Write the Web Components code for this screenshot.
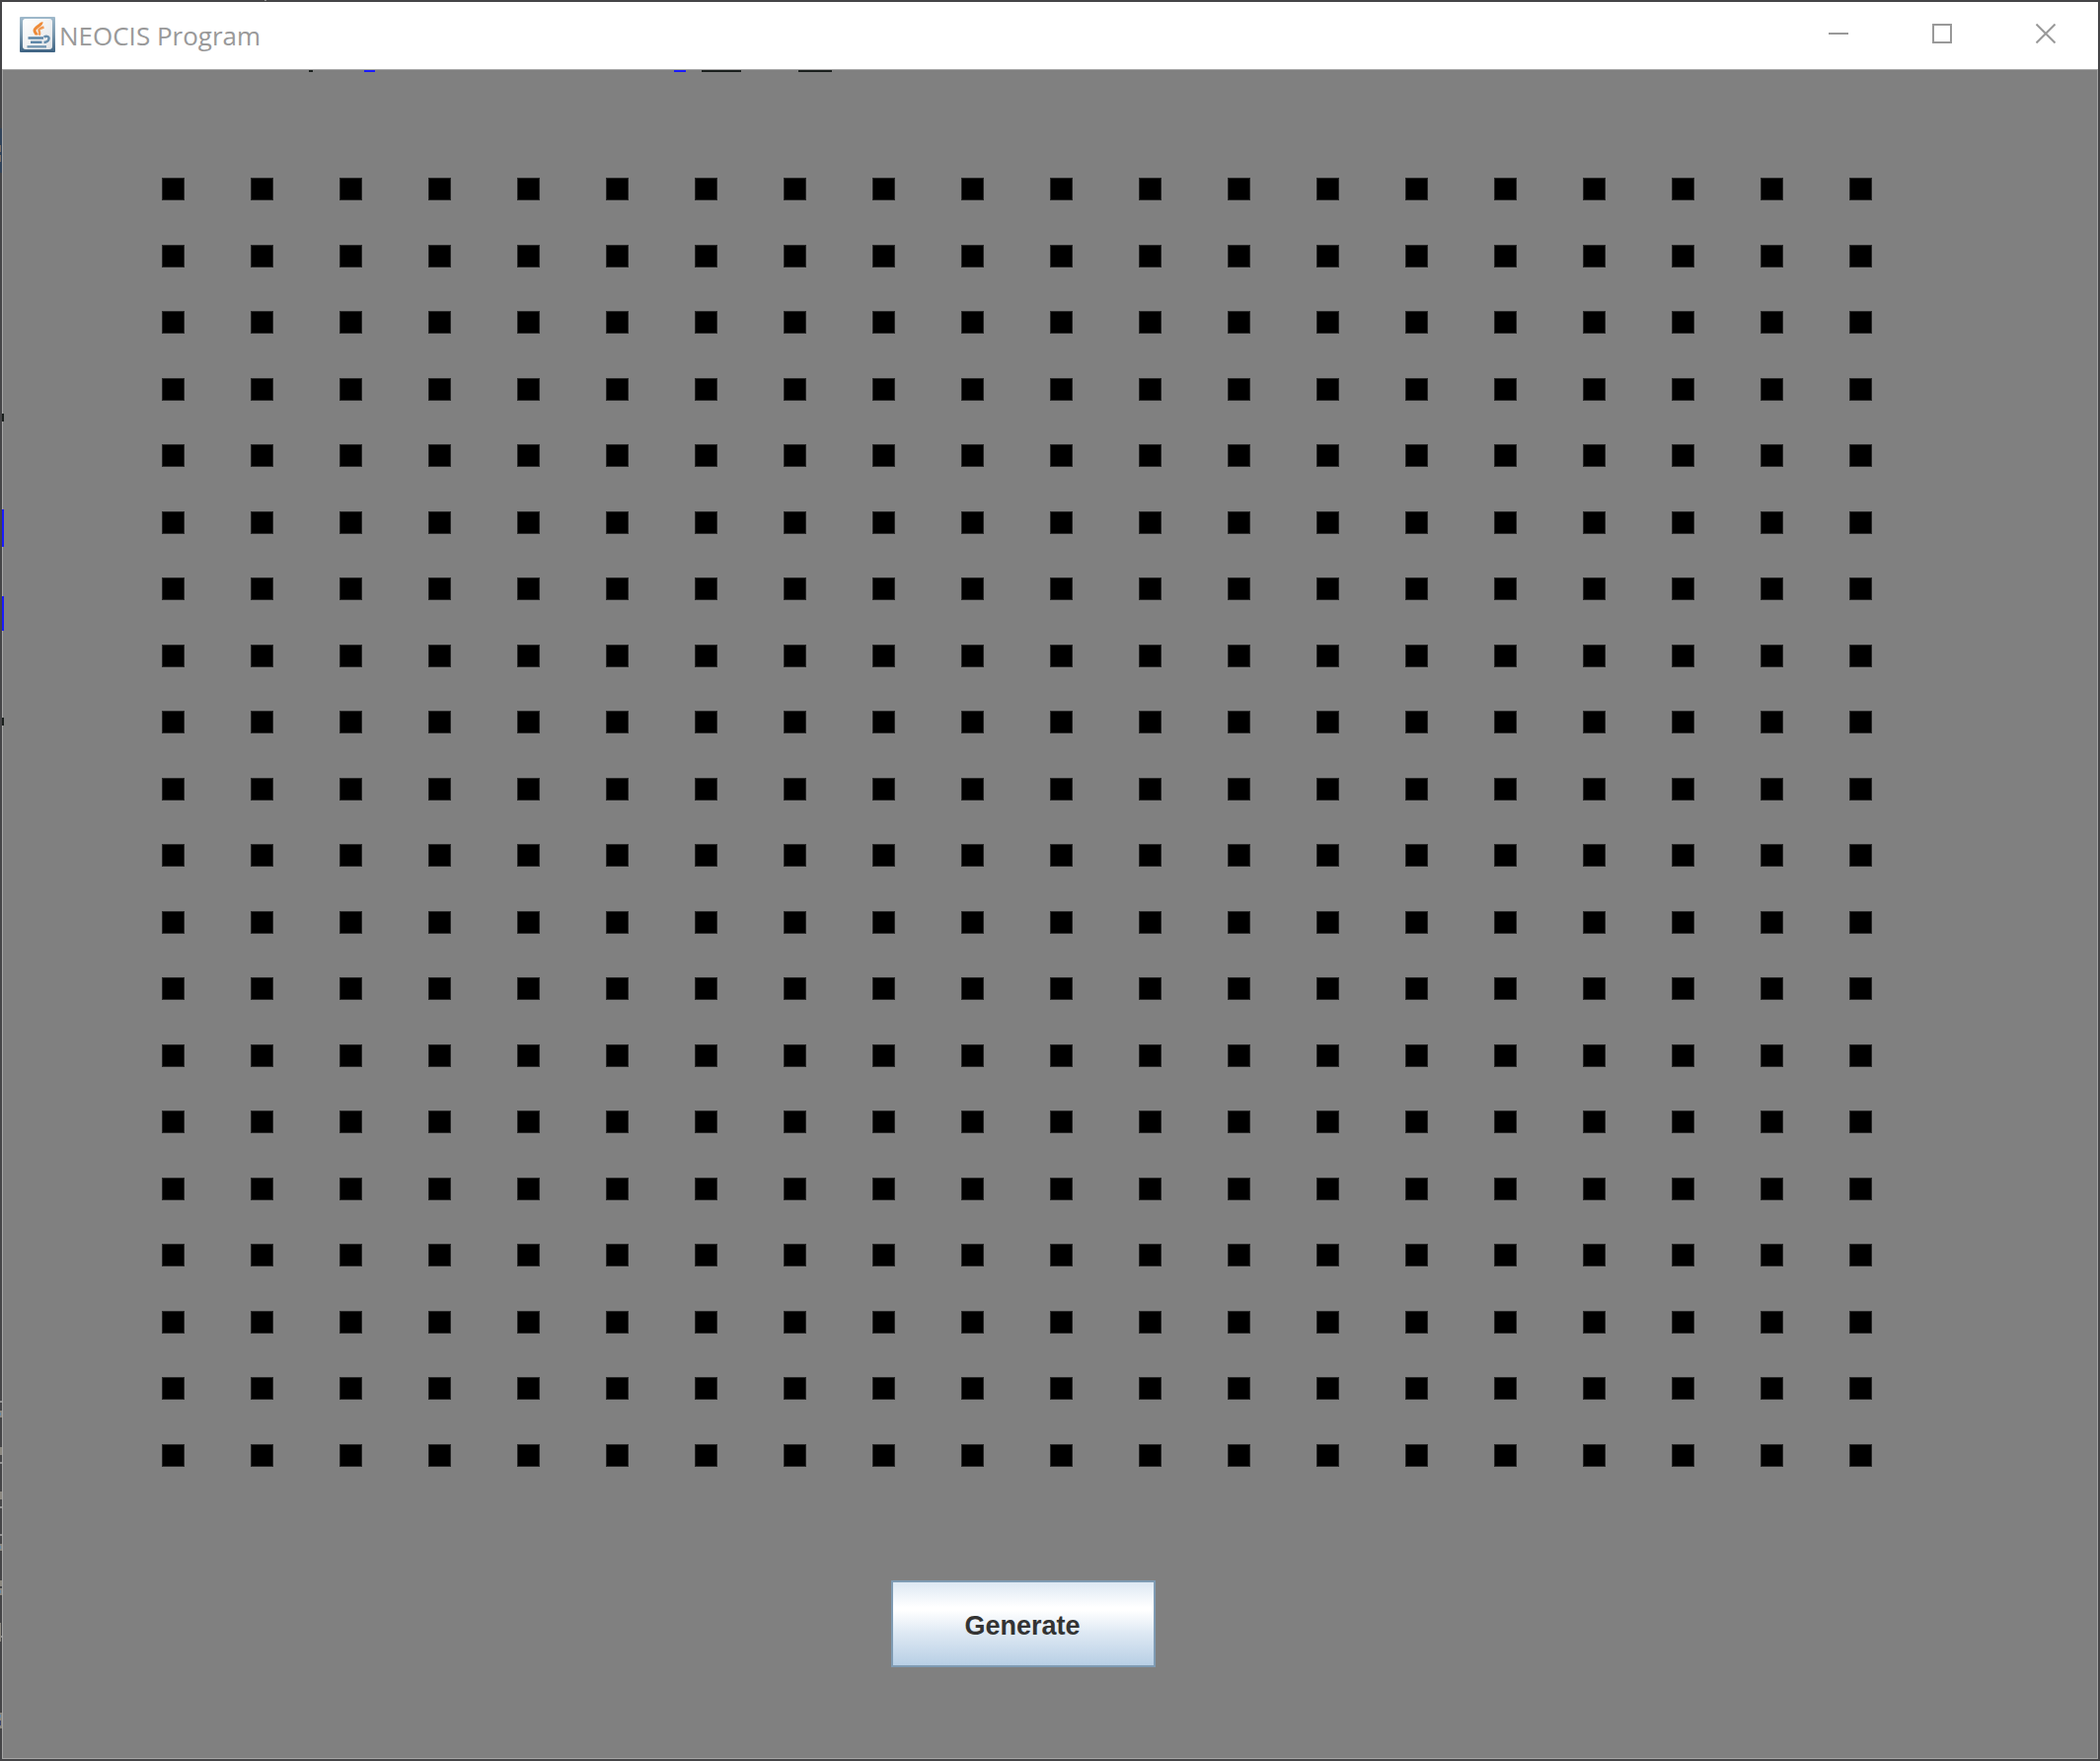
<!DOCTYPE html>
<html lang="en">
<head>
<meta charset="utf-8">
<title>NEOCIS Program</title>
<style>
  html, body { height: 100%; margin: 0; }
  body { background: #454547; font-family: "Open Sans", "Noto Sans", sans-serif; }
</style>
</head>
<body>
<app-window>
  <title-bar slot="title">NEOCIS Program</title-bar>
  <point-grid></point-grid>
  <metal-button>Generate</metal-button>
</app-window>

<script>
class BaseElement extends HTMLElement {
  constructor() {
    super();
    this.attachShadow({ mode: "open" }).innerHTML = this.constructor.markup;
  }
}

customElements.define("java-icon", class extends BaseElement {
  static markup = `
    <style>:host { display: block; width: 36px; height: 36px; } svg { display: block; }</style>
    <svg width="36" height="36" viewBox="0 0 36 36" fill="none" aria-hidden="true">
      <defs>
        <linearGradient id="edge" x1="0" y1="0" x2="0" y2="1">
          <stop offset="0" stop-color="#9fb9cb"/><stop offset=".5" stop-color="#7897ad"/><stop offset="1" stop-color="#3d6282"/>
        </linearGradient>
        <linearGradient id="face" x1="0" y1="0" x2="1" y2="1">
          <stop offset="0" stop-color="#ffffff"/><stop offset="1" stop-color="#e3e5e7"/>
        </linearGradient>
      </defs>
      <rect width="36" height="36" rx="1" fill="url(#edge)"/>
      <rect x="3" y="2" width="30" height="31" rx="3" fill="url(#face)"/>
      <path d="M22 5.500c.8 3-7 5-7 8.500 0 2 2 2.500 2 4.500" stroke="#ee8a38" stroke-width="3"/>
      <path d="M24.500 10.500c-3 .8-5.500 2-5 3.500.4 1.500 1.500 2 0 4.500" stroke="#f09a55" stroke-width="2.500"/>
      <path d="M8.500 21.500h15.500M11 25.800h11.500" stroke="#5e87a8" stroke-width="2.600"/>
      <path d="M24.500 20.500c3-1.500 5.500-.5 5 2-.4 2-2.500 3.200-5 3.500" stroke="#668dab" stroke-width="2.400"/>
      <path d="M7.500 30.300h19.500" stroke="#7598b3" stroke-width="2.400"/>
    </svg>`;
});

customElements.define("caption-button", class extends BaseElement {
  static markup = `
    <style>
      :host { display: block; width: 105px; height: 64px; }
      button { display: flex; align-items: center; justify-content: center; width: 100%; height: 100%;
               padding: 0; border: 0; background: none; }
      svg { display: block; }
    </style>
    <button type="button"><svg width="20" height="20" viewBox="0 0 20 20" fill="none" stroke="#999" stroke-width="2" aria-hidden="true"><path/></svg></button>`;
  static shapes = {
    Minimize: "M0 10h20",
    Maximize: "M1 1h18v18H1z",
    Close: "M.5 .5l19 19M19.500 .5l-19 19"
  };
  connectedCallback() {
    const kind = this.getAttribute("kind");
    this.shadowRoot.querySelector("button").setAttribute("aria-label", kind);
    this.shadowRoot.querySelector("path").setAttribute("d", this.constructor.shapes[kind]);
  }
});

customElements.define("title-bar", class extends BaseElement {
  static markup = `
    <style>
      :host { display: flex; align-items: flex-start; height: 68px; padding-right: 1px; background: #fff; color: #999; }
      java-icon { margin: 15px 4px 0 18px; }
      .name { flex: 1; padding-top: 16px; font-size: 26px; line-height: 36px; white-space: nowrap; }
    </style>
    <java-icon></java-icon>
    <div class="name"><slot></slot></div>
    <caption-button kind="Minimize"></caption-button>
    <caption-button kind="Maximize"></caption-button>
    <caption-button kind="Close"></caption-button>`;
});

customElements.define("point-grid", class extends BaseElement {
  static markup = `
    <style>
      :host { display: flex; flex: 1; flex-direction: column; justify-content: space-between;
              align-self: stretch; margin: 0 228px 0 161px; }
      .row { display: flex; justify-content: space-between; }
      .point { box-sizing: border-box; width: 23px; height: 23px; background: #000; border: 1px solid #282828; }
    </style>`;
  connectedCallback() {
    for (let y = 0; y < 20; y++) {
      const row = document.createElement("div");
      row.className = "row";
      for (let x = 0; x < 20; x++) {
        const point = document.createElement("div");
        point.className = "point";
        row.append(point);
      }
      this.shadowRoot.append(row);
    }
  }
});

customElements.define("metal-button", class extends BaseElement {
  static markup = `
    <style>
      :host { display: block; margin: 115px 54px 0 0; }
      button { display: block; width: 268px; height: 88px; padding: 4px 2px 0 0; border: 2px solid #7f9bb3;
               background: linear-gradient(#dde8f3, #fff 30%, #fff 34%, #dde8f3 62%, #b8cfe5);
               color: #333; font: bold 27px/36px "Liberation Sans", Arial, sans-serif; }
    </style>
    <button type="button"><slot></slot></button>`;
});

/* Slivers of the desktop that show around the window frame. */
customElements.define("edge-traces", class extends BaseElement {
  static markup = `
    <style>
      :host { position: absolute; inset: 0; pointer-events: none; }
      svg { display: block; width: 100%; height: 100%; }
    </style>
    <svg aria-hidden="true" shape-rendering="crispEdges">
      <path fill="#1b201e" d="M313 71h4v2h-4zM711 71h40v2h-40zM809 71h34v2h-34zM2 419h2v8h-2zM2 727h2v8h-2z"/>
      <path fill="#1a1aff" d="M369 71h11v2h-11zM683 71h12v2h-12zM2 516h2v38h-2zM2 604h2v35h-2z"/>
      <path fill="#30435a" d="M0 130h2v45h-2z"/>
      <path fill="#7c6e66" d="M0 147h1v7h-1zM0 157h1v7h-1z"/>
      <path fill="#929292" d="M0 1419h2v2h-2zM0 1481h2v2h-2zM0 1526h2v2h-2zM0 1554h2v2h-2zM0 1657h2v2h-2zM268 0h2v1h-2z"/>
      <path fill="#8b8880" d="M0 1429h2v7h-2zM0 1466h2v8h-2zM0 1511h2v8h-2zM0 1564h2v7h-2zM0 1601h2v6h-2zM0 1609h2v7h-2zM0 1644h1v19h-1zM0 1735h2v16h-2z"/>
      <path fill="#6388a5" d="M0 1431h1v3h-1zM0 1566h1v3h-1zM0 1611h1v3h-1zM0 1737h1v3h-1z"/>
      <path fill="#39456f" d="M0 1743h1v5h-1z"/>
    </svg>`;
});

customElements.define("app-window", class extends BaseElement {
  static markup = `
    <style>
      :host { display: flex; flex-direction: column; position: relative; box-sizing: border-box;
              min-height: 100vh; border: 2px solid transparent; }
      edge-traces { margin: -2px; }
      main { display: flex; flex: 1; flex-direction: column; align-items: center; box-sizing: border-box;
             padding: 109px 0 92px; background: #808080; border: 1px solid #a5a5a5; }
    </style>
    <slot name="title"></slot>
    <main><slot></slot></main>
    <edge-traces></edge-traces>`;
});
</script>
</body>
</html>
